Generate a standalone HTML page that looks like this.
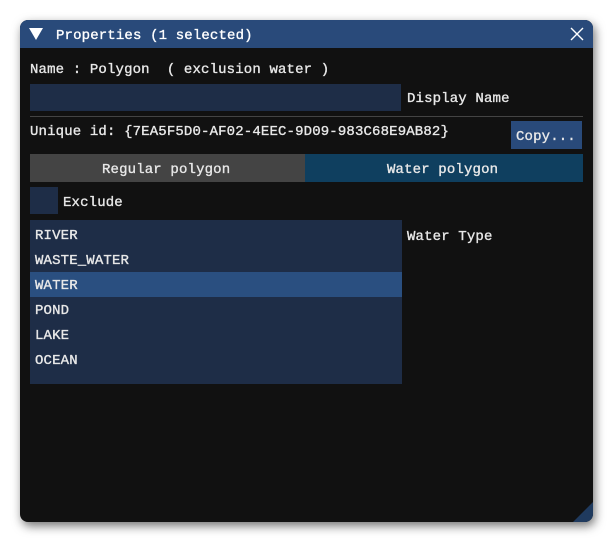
<!DOCTYPE html>
<html><head><meta charset="utf-8"><style>
html,body{margin:0;padding:0;width:613px;height:543px;background:#fff;overflow:hidden}
body{font-family:"Liberation Mono","DejaVu Sans Mono",monospace;font-size:14px;color:#e8e8e8;letter-spacing:0.15px;-webkit-text-stroke:0.35px currentColor}
.win{position:absolute;left:20px;top:20px;width:573px;height:502px;background:#111;border-radius:8px;box-shadow:2px 4px 10px rgba(0,0,0,0.55);overflow:hidden}
.title{position:absolute;left:0;top:0;width:573px;height:28px;background:#294a7a}
.abs{position:absolute;white-space:pre;line-height:16px}
.box{position:absolute}
</style></head><body>
<div class="win">
 <div class="title">
  <svg class="box" style="left:9px;top:8px" width="14" height="12"><polygon points="0,0 14,0 7,12" fill="#fff"/></svg>
  <div class="abs" style="left:36px;top:8px;color:#fff">Properties (1 selected)</div>
  <svg class="box" style="left:550px;top:7px" width="14" height="14"><path d="M1 1L13 13M13 1L1 13" stroke="#fff" stroke-width="1.4"/></svg>
 </div>
 <div class="abs" style="left:10px;top:42px">Name : Polygon  ( exclusion water )</div>
 <div class="box" style="left:10px;top:64px;width:371px;height:27px;background:#1e2d47"></div>
 <div class="abs" style="left:387px;top:71px">Display Name</div>
 <div class="box" style="left:10px;top:96px;width:553px;height:1px;background:#444"></div>
 <div class="abs" style="left:10px;top:104px">Unique id: {7EA5F5D0-AF02-4EEC-9D09-983C68E9AB82}</div>
 <div class="box" style="left:491px;top:101px;width:71px;height:28px;background:#294a7a"></div>
 <div class="abs" style="left:496px;top:109px">Copy...</div>
 <div class="box" style="left:10px;top:134px;width:275px;height:28px;background:#444"></div>
 <div class="box" style="left:285px;top:134px;width:278px;height:28px;background:#0f3f5f"></div>
 <div class="abs" style="left:82px;top:142px">Regular polygon</div>
 <div class="abs" style="left:367px;top:142px">Water polygon</div>
 <div class="box" style="left:10px;top:167px;width:28px;height:27px;background:#1e2d47"></div>
 <div class="abs" style="left:43px;top:175px">Exclude</div>
 <div class="box" style="left:10px;top:200px;width:372px;height:164px;background:#1e2d47"></div>
 <div class="box" style="left:10px;top:252px;width:372px;height:25px;background:#2a4f80"></div>
 <div class="abs" style="left:15px;top:208px">RIVER</div>
 <div class="abs" style="left:15px;top:233px">WASTE_WATER</div>
 <div class="abs" style="left:15px;top:258px">WATER</div>
 <div class="abs" style="left:15px;top:283px">POND</div>
 <div class="abs" style="left:15px;top:308px">LAKE</div>
 <div class="abs" style="left:15px;top:333px">OCEAN</div>
 <div class="abs" style="left:387px;top:209px">Water Type</div>
 <svg class="box" style="left:553px;top:482px" width="20" height="20"><polygon points="20,0 20,20 0,20" fill="#1f3a5e"/></svg>
</div>
</body></html>
